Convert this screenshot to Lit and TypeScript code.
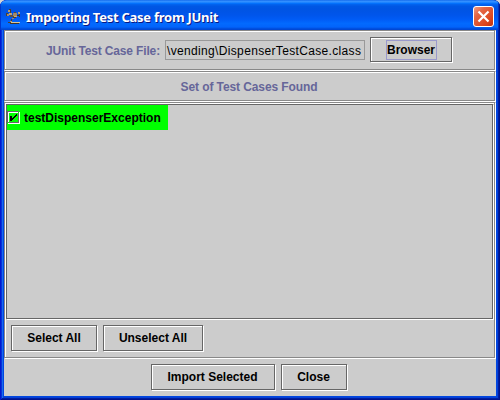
import { LitElement, html, css, svg } from "lit";
import { customElement, property } from "lit/decorators.js";

@customElement("metal-button")
class MetalButton extends LitElement {
  @property({ type: Boolean }) focused = false;
  static styles = css`
    :host { display: block; box-sizing: border-box; }
    .btn {
      box-sizing: border-box; width: calc(100% - 1px); height: calc(100% - 1px);
      display: flex; align-items: center; justify-content: center;
      border: 1px solid #666; box-shadow: inset 1px 1px #fff, 1px 1px #fff;
      font: bold 12px "Liberation Sans", Arial, sans-serif; color: #000; white-space: nowrap;
      background: #ccc;
    }
    .label { line-height: 18px; padding: 0 1px; border: 1px solid transparent; }
    .focused { border-color: #99c; padding: 0 1px 0 0; margin-left: 1px; }
  `;
  render() {
    return html`<div class="btn"><span class="label ${this.focused ? "focused" : ""}"><slot></slot></span></div>`;
  }
}

const iconPixels: [number, number, number, number, string][] = [
  [3, 0, 2, 1, "#4a3c30"], [2, 1, 2, 2, "#b59a70"], [4, 1, 1, 3, "#4a3a2c"],
  [0, 4, 2, 3, "#4a4038"], [1, 5, 2, 2, "#a88c64"], [3, 4, 3, 2, "#c0a47a"], [4, 6, 4, 2, "#5c5144"],
  [7, 4, 4, 3, "#a08a68"], [8, 3, 2, 1, "#5a4a3a"], [11, 6, 2, 1, "#33302c"], [12, 3, 2, 2, "#b59a70"],
  [13, 5, 1, 3, "#4a3a2c"], [8, 7, 3, 1, "#c8aa7a"], [7, 8, 3, 1, "#4a3c30"], [6, 9, 2, 1, "#a88c64"],
  [5, 10, 1, 2, "#4a3c30"], [4, 12, 2, 1, "#b59a70"], [2, 13, 3, 1, "#4a3c30"],
  [5, 13, 9, 1, "#d6c49c"], [4, 14, 9, 1, "#3a342e"],
];

@customElement("app-root")
class AppRoot extends LitElement {
  static styles = css`
    :host { display: block; width: 500px; height: 400px; background: #d4d4d4;
      font: bold 12px "Liberation Sans", Arial, sans-serif; color: #000; white-space: nowrap; }
    * { box-sizing: border-box; }
    .window {
      width: 500px; height: 400px; padding: 0 4px 4px; border-radius: 7px 7px 0 0;
      display: flex; flex-direction: column; background: #0046e0;
      box-shadow: inset 1px 0 #0019cf, inset -1px 0 #00138c, inset 0 -1px #00138c, inset 2px 0 #0831d9, inset -2px 0 #001ea0, inset 0 -2px #001ea0, inset 3px 0 #166aee, inset -3px 0 #0441d8, inset 0 -3px #0441d8;
      overflow: hidden;
    }
    .title {
      height: 30px; flex: none; margin: 0 -4px; padding: 0 6px 0 6px; display: flex; align-items: center;
      background: linear-gradient(#0058e6 0, #3a93ff 3%, #2a8bff 7%, #0474ff 11%, #0262ee 15%, #0057e5 21%, #0054e3 30%, #0055eb 50%, #005bf5 64%, #026afe 78%, #0264fb 90%, #0050e0 95%, #0043cf 100%);
      box-shadow: inset 1px 0 #0037ce, inset -1px 0 #00138c, inset -2px 0 #0035bd;
    }
    .icon { width: 16px; height: 16px; margin-top: 3px; }
    .caption {
      flex: 1; margin: 3px 0 0 4px; color: #fff; text-shadow: 1px 1px #0a1883;
      font: bold 13px/18px "Noto Sans", sans-serif; letter-spacing: -0.26px;
    }
    .close { width: 21px; height: 21px; margin-top: 3px; }
    .body { flex: 1; min-height: 0; display: flex; flex-direction: column; background: #ccc; }
    .panel { margin-right: 1px; margin-bottom: 1px; border: 1px solid #888; box-shadow: inset 1px 1px #fff, 1px 1px #fff; }
    .file { height: 40px; display: flex; padding: 6px 0 0 41px; }
    .tag { color: #669; line-height: 28px; width: 119px; flex: none; letter-spacing: -0.15px; }
    .field { flex: none; width: 200px; height: 20px; margin-top: 3px; border: 1px solid #999; overflow: hidden;
      font-weight: normal; line-height: 20px; padding-left: 1px; letter-spacing: 0.34px; }
    .browse { width: 83px; height: 26px; margin-left: 5px; }
    .heading { height: 30px; color: #669; text-align: center; line-height: 30px; padding-right: 1px; letter-spacing: -0.1px; }
    .found { height: 256px; padding: 1px 0 0 1px; }
    .list { width: 487px; height: 215px; border: 1px solid #666; box-shadow: 1px 1px #fff; }
    .item { width: 161px; height: 25px; display: flex; align-items: center; background: #0f0; }
    .check { width: 13px; height: 13px; margin: 0 4px 0 0; }
    .row { display: flex; gap: 5px; padding: 6px 0 0 5px; }
    .select { width: 87px; height: 27px; }
    .unselect { width: 101px; height: 27px; }
    .actions { display: flex; justify-content: center; gap: 5px; padding: 5px 2px 0 0; }
    .import { width: 125px; height: 27px; }
    .dismiss { width: 67px; height: 27px; }
  `;
  render() {
    return html`<div class="window">
      <div class="title">
        <svg class="icon" viewBox="0 0 16 16" shape-rendering="crispEdges">
          ${iconPixels.map(([x, y, w, h, c]) => svg`<rect x=${x} y=${y} width=${w} height=${h} fill=${c}></rect>`)}
        </svg>
        <span class="caption">Importing Test Case from JUnit</span>
        <svg class="close" viewBox="0 0 21 21">
          <defs><linearGradient id="red" x1="0" y1="0" x2="1" y2="1">
            <stop offset="0" stop-color="#f0a088"></stop><stop offset=".3" stop-color="#e46645"></stop>
            <stop offset=".75" stop-color="#dc441b"></stop><stop offset="1" stop-color="#b83010"></stop>
          </linearGradient></defs>
          <rect x=".5" y=".5" width="20" height="20" rx="2.5" fill="url(#red)" stroke="#fff"></rect>
          <path d="M5.5 5.5L15.5 15.5M15.5 5.5L5.5 15.5" stroke="#fff" stroke-width="2.2"></path>
        </svg>
      </div>
      <div class="body">
        <div class="panel file">
          <span class="tag">JUnit Test Case File:</span>
          <div class="field">\\vending\\DispenserTestCase.class</div>
          <metal-button class="browse" focused>Browser</metal-button>
        </div>
        <div class="panel heading">Set of Test Cases Found</div>
        <div class="panel found">
          <div class="list"><div class="item">
            <svg class="check" viewBox="0 0 13 13" shape-rendering="crispEdges">
              <path d="M.5 12V.5H12M11.5 2V11.5H2" fill="none" stroke="#666"></path>
              <path d="M1.5 11V1.5H11M12.5 1V12.5H1" fill="none" stroke="#fff"></path>
              <path d="M3 5h2v2h1v-1h1v-1h1v-1h1v-1h1v2h-1v1h-1v1h-1v1h-1v1h-1v1h-2z" fill="#000"></path>
            </svg>
            <span>testDispenserException</span>
          </div></div>
          <div class="row">
            <metal-button class="select">Select All</metal-button>
            <metal-button class="unselect">Unselect All</metal-button>
          </div>
        </div>
        <div class="actions">
          <metal-button class="import">Import Selected</metal-button>
          <metal-button class="dismiss">Close</metal-button>
        </div>
      </div>
    </div>`;
  }
}
